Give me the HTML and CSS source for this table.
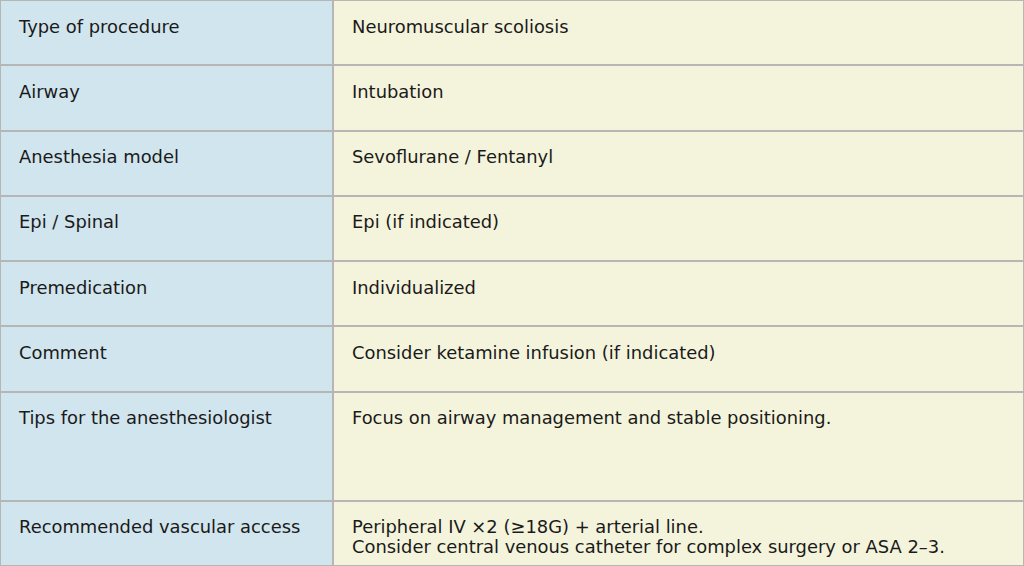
FILE: index.html
```html
<!DOCTYPE html>
<html>
<head>
<meta charset="utf-8">
<link rel="stylesheet" href="styles.css">
</head>
<body>
<table class="info">
  <colgroup><col class="c-label"><col class="c-value"></colgroup>
  <tr class="row"><td class="label">Type of procedure</td><td class="value">Neuromuscular scoliosis</td></tr>
  <tr class="row"><td class="label">Airway</td><td class="value">Intubation</td></tr>
  <tr class="row"><td class="label">Anesthesia model</td><td class="value">Sevoflurane / Fentanyl</td></tr>
  <tr class="row"><td class="label">Epi / Spinal</td><td class="value">Epi (if indicated)</td></tr>
  <tr class="row"><td class="label">Premedication</td><td class="value">Individualized</td></tr>
  <tr class="row"><td class="label">Comment</td><td class="value">Consider ketamine infusion (if indicated)</td></tr>
  <tr class="row tall"><td class="label">Tips for the anesthesiologist</td><td class="value">Focus on airway management and stable positioning.</td></tr>
  <tr class="row"><td class="label">Recommended vascular access</td><td class="value">Peripheral IV ×2 (≥18G) + arterial line.<br>Consider central venous catheter for complex surgery or ASA 2–3.</td></tr>
</table>
</body>
</html>
```
FILE: styles.css
```css
html, body {
  margin: 0;
  padding: 0;
  background: #f4f4dc;
}
.info {
  width: 1024px;
  table-layout: fixed;
  border-collapse: separate;
  border-spacing: 0;
  font-family: "DejaVu Sans", sans-serif;
  font-size: 17.9px;
  line-height: 19.5px;
  color: #1a1a1a;
}
.c-label { width: 333px; }
.info td {
  border: 1px solid #b6b6b6;
  vertical-align: top;
  padding: 15.5px 18px 0 18px;
  box-sizing: border-box;
}
.info .row td { height: 65.3px; }
.info .row.tall td { height: 109px; }
.label {
  background: #d1e5ee;
}
.value {
  background: #f4f4dc;
}
```
